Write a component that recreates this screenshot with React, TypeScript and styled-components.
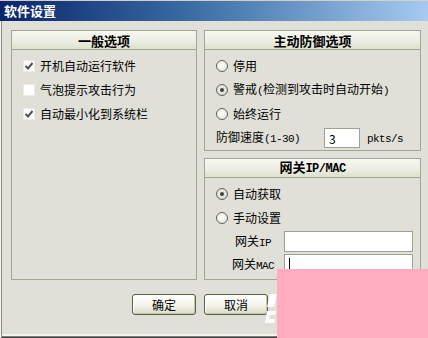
import React from "react";
import styled, { createGlobalStyle } from "styled-components";

const GlobalStyle = createGlobalStyle`
  html, body {
    margin: 0;
    padding: 0;
    background: #e0e0d8;
  }
  body {
    font-family: "Noto Sans CJK SC", "Liberation Sans", sans-serif;
    font-size: 12px;
    color: #000;
  }
`;

function App() {
  return (
    <>
      <GlobalStyle />
      <Window>
        <TitleBar>软件设置</TitleBar>
        <Body>
          <Columns>
            <Group $height={250}>
              <GroupHeader>一般选项</GroupHeader>
              <GroupContent>
                <Row>
                  <CheckBox $checked />
                  <Text>开机自动运行软件</Text>
                </Row>
                <Row>
                  <CheckBox />
                  <Text>气泡提示攻击行为</Text>
                </Row>
                <Row>
                  <CheckBox $checked />
                  <Text>自动最小化到系统栏</Text>
                </Row>
              </GroupContent>
            </Group>
            <RightColumn>
              <Group $height={121}>
                <GroupHeader>主动防御选项</GroupHeader>
                <GroupContent>
                  <Row>
                    <Radio />
                    <Text>停用</Text>
                  </Row>
                  <Row>
                    <Radio $checked />
                    <Text>
                      警戒<Mono>(</Mono>检测到攻击时自动开始<Mono>)</Mono>
                    </Text>
                  </Row>
                  <Row>
                    <Radio />
                    <Text>始终运行</Text>
                  </Row>
                  <Row $gap={0}>
                    <Text>
                      防御速度<Mono>(1-30)</Mono>
                    </Text>
                    <SpeedEdit>3</SpeedEdit>
                    <Text>
                      <Mono>pkts/s</Mono>
                    </Text>
                  </Row>
                </GroupContent>
              </Group>
              <Group $height={122}>
                <GroupHeader>
                  <Text>
                    网关<Mono $bold>IP/MAC</Mono>
                  </Text>
                </GroupHeader>
                <GroupContent $bottom={3}>
                  <Row>
                    <Radio $checked />
                    <Text>自动获取</Text>
                  </Row>
                  <Row>
                    <Radio />
                    <Text>手动设置</Text>
                  </Row>
                  <Row $height={23} $gap={0}>
                    <FieldLabel>
                      网关<Mono>IP</Mono>
                    </FieldLabel>
                    <Edit />
                  </Row>
                  <Row $height={23} $gap={0}>
                    <FieldLabel>
                      网关<Mono>MAC</Mono>
                    </FieldLabel>
                    <Edit>
                      <Caret />
                    </Edit>
                  </Row>
                </GroupContent>
              </Group>
            </RightColumn>
          </Columns>
          <Footer>
            <Button>确定</Button>
            <Button>取消</Button>
          </Footer>
        </Body>
        <Watermark width="14" height="36" viewBox="0 0 14 36">
          <path d="M6 1 L13 1 L10 14 L3 14 Z" fill="#fff" />
          <path d="M3 18 L12 18 L11 22 L6 22 L5 26 L11 26 L10 30 L1 30 Z" fill="#fff" />
        </Watermark>
        <PinkPatch />
      </Window>
    </>
  );
}

export default App;

const Window = styled.div`
  position: relative;
  width: 428px;
  height: 338px;
  overflow: hidden;
  background: #e0e0d8;
  display: flex;
  flex-direction: column;
`;

const TitleBar = styled.div`
  flex: none;
  height: 21px;
  display: flex;
  align-items: center;
  padding-left: 4px;
  background: linear-gradient(to right, #0a246a, #3a6ea5 45%, #a6caf0);
  color: #fff;
  font-size: 13px;
  font-weight: bold;
  box-shadow: inset 0 1px #d4d0c8;
`;

const Body = styled.div`
  flex: 1;
  display: flex;
  flex-direction: column;
  padding: 9px 0 0 11px;
  box-shadow: inset 1px 0 #f4f4ee, inset 2px 0 #8c8c84, inset 0 -1px #3c3c3c,
    inset 0 -2px #808078, inset 0 -4px #f4f4ee;
`;

const Columns = styled.div`
  display: flex;
  gap: 7px;
`;

const RightColumn = styled.div`
  display: flex;
  flex-direction: column;
  gap: 7px;
  width: 217px;
`;

const Group = styled.div<{ $height: number }>`
  box-sizing: border-box;
  width: ${(p) => (p.$height > 200 ? 186 : 217)}px;
  height: ${(p) => p.$height}px;
  border: 1px solid #a2a793;
  display: flex;
  flex-direction: column;
`;

const GroupHeader = styled.div`
  height: 18px;
  flex: none;
  display: flex;
  align-items: center;
  justify-content: center;
  border-bottom: 1px solid #a2a793;
  background: linear-gradient(#f7f8f2, #eceee3 55%, #dde1cf);
  font-size: 13px;
  font-weight: bold;
`;

const GroupContent = styled.div<{ $bottom?: number }>`
  display: flex;
  flex-direction: column;
  padding: 4px 0 ${(p) => p.$bottom ?? 0}px 11px;
`;

const Row = styled.div<{ $height?: number; $gap?: number }>`
  display: flex;
  align-items: center;
  height: ${(p) => p.$height ?? 24}px;
  gap: ${(p) => p.$gap ?? 5}px;
  white-space: nowrap;
`;

const Text = styled.span`
  line-height: 16px;
`;

// half-width latin runs, 6px per char like the dialog's bitmap font
const Mono = styled.span<{ $bold?: boolean }>`
  font-family: "Liberation Mono", "DejaVu Sans Mono", monospace;
  font-size: ${(p) => (p.$bold ? 12 : 11)}px;
  letter-spacing: ${(p) => (p.$bold ? -0.5 : -0.6)}px;
  font-weight: ${(p) => (p.$bold ? "bold" : "normal")};
`;

const CheckBoxBox = styled.span`
  flex: none;
  box-sizing: border-box;
  width: 12px;
  height: 12px;
  background: #fff;
  border: 1px solid #ecece6;
  display: flex;
  align-items: center;
  justify-content: center;
`;

function CheckBox({ $checked }: { $checked?: boolean }) {
  return (
    <CheckBoxBox>
      {$checked && (
        <svg width="10" height="10" viewBox="0 0 10 10">
          <polyline
            points="1.5,5 4,7.5 8.5,2"
            fill="none"
            stroke="#505050"
            strokeWidth="2"
          />
        </svg>
      )}
    </CheckBoxBox>
  );
}

const Radio = styled.span<{ $checked?: boolean }>`
  flex: none;
  position: relative;
  box-sizing: border-box;
  width: 12px;
  height: 12px;
  border-radius: 50%;
  border: 1px solid #5e6452;
  background: ${(p) =>
    p.$checked
      ? "radial-gradient(circle at 40% 40%, #f2f2ec, #cfd0c6)"
      : "radial-gradient(circle at 40% 40%, #ffffff, #e6e6de)"};

  &::after {
    content: "";
    display: ${(p) => (p.$checked ? "block" : "none")};
    position: absolute;
    left: 3px;
    top: 3px;
    width: 4px;
    height: 4px;
    border-radius: 50%;
    background: #3e4236;
  }
`;

const SpeedEdit = styled.div`
  box-sizing: border-box;
  width: 36px;
  height: 20px;
  margin: 0 7px 0 24px;
  padding-left: 4px;
  display: flex;
  align-items: center;
  background: #fff;
  border: 1px solid #9da393;
`;

const FieldLabel = styled.div`
  width: 54px;
  margin-left: 10px;
  text-align: center;
  line-height: 16px;
`;

const Edit = styled.div`
  box-sizing: border-box;
  width: 129px;
  height: 21px;
  margin-left: 4px;
  padding-left: 4px;
  display: flex;
  align-items: center;
  background: #fff;
  border: 1px solid #9da393;
`;

const Caret = styled.span`
  width: 1px;
  height: 14px;
  background: #000;
`;

const Footer = styled.div`
  display: flex;
  gap: 8px;
  margin-top: 14px;
  padding-left: 121px;
`;

const Button = styled.button`
  box-sizing: border-box;
  width: 64px;
  height: 21px;
  padding: 0;
  font-family: inherit;
  font-size: 12px;
  color: #000;
  border: 1px solid #5a6444;
  border-radius: 3px;
  background: linear-gradient(#ffffff, #f4f4ea 55%, #d9dac6);
  box-shadow: inset -1px -1px #c4c6ae, inset 1px 1px #ffffff;
`;

const Watermark = styled.svg`
  position: absolute;
  left: 264px;
  top: 293px;
`;

const PinkPatch = styled.div`
  position: absolute;
  left: 277px;
  top: 269px;
  right: 0;
  bottom: 0;
  background: #ffabc0;
`;
